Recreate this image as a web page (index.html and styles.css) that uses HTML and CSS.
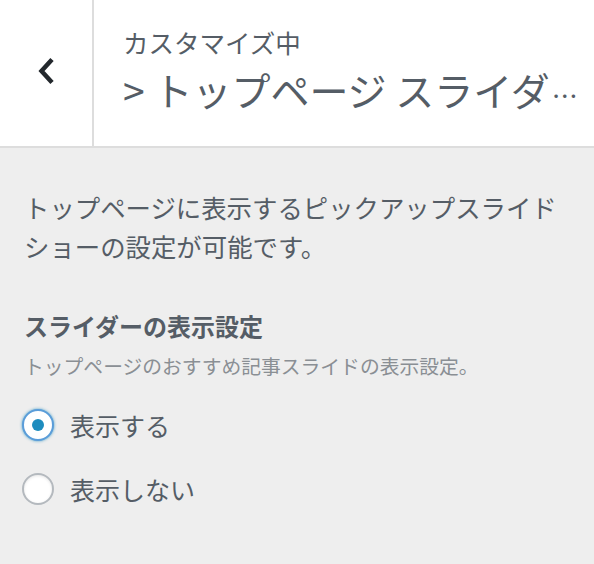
FILE: index.html
```html
<!DOCTYPE html>
<html lang="ja">
<head>
    <meta charset="UTF-8">
    <meta name="viewport" content="width=device-width, initial-scale=1.0">
    <title>カスタマイズ中</title>
    <link rel="stylesheet" href="styles.css">
</head>
<body>

    <!-- Hlavička panelu -->
    <div class="panel-header">
        <button class="back-button" aria-label="戻る">
            <svg width="16" height="28" viewBox="0 0 16 28">
                <path d="M14 2.5 L3.5 14 L14 25.5" fill="none" stroke="#23282d" stroke-width="4.5" stroke-linejoin="miter"/>
            </svg>
        </button>
        <div class="title-wrap">
            <span class="subtitle">カスタマイズ中</span>
            <h3 class="title">&gt; トップページ スライダ<span class="dots">…</span></h3>
        </div>
    </div>

    <!-- Obsah sekce -->
    <div class="panel-body">
        <p class="section-desc">トップページに表示するピックアップスライドショーの設定が可能です。</p>

        <div class="control">
            <span class="control-title">スライダーの表示設定</span>
            <span class="control-desc">トップページのおすすめ記事スライドの表示設定。</span>

            <label class="radio-row">
                <input type="radio" name="slider_show" value="1" checked>
                <span>表示する</span>
            </label>
            <label class="radio-row">
                <input type="radio" name="slider_show" value="0">
                <span>表示しない</span>
            </label>
        </div>
    </div>

</body>
</html>
```

FILE: styles.css
```css
/* Základ */
html, body {
    margin: 0;
    padding: 0;
}

body {
    background-color: #eee;
    color: #555d66;
    font-family: "Noto Sans CJK JP", "Noto Sans", sans-serif;
}

/* Hlavička */
.panel-header {
    display: flex;
    height: 146px;
    background-color: #fff;
    border-bottom: 2px solid #ddd;
}

.back-button {
    width: 94px;
    flex: none;
    padding: 0 0 4px 0;
    margin: 0;
    background: #fff;
    border: none;
    border-right: 2px solid #ddd;
    display: flex;
    align-items: center;
    justify-content: center;
    cursor: pointer;
}

.title-wrap {
    flex: 1;
    min-width: 0;
    padding: 26px 8px 0 29px;
}

.subtitle {
    display: block;
    font-size: 25.5px;
    line-height: 32px;
}

.title {
    margin: 6px 0 0 0;
    font-size: 39px;
    font-weight: normal;
    line-height: 50px;
    white-space: nowrap;
}

.title .dots {
    font-size: 26px;
    margin-left: 2px;
}

/* Obsah */
.panel-body {
    padding: 40px 24px 20px 24px;
}

.section-desc {
    margin: 0;
    font-size: 25.4px;
    line-height: 39px;
}

.control {
    margin-top: 42px;
}

.control-title {
    display: block;
    font-size: 24px;
    font-weight: bold;
    line-height: 35px;
}

.control-desc {
    display: block;
    margin-top: 8px;
    font-size: 19.8px;
    line-height: 30px;
    color: #8a8f94;
}

.radio-row {
    display: flex;
    align-items: center;
    height: 40px;
    margin-top: 24px;
    font-size: 25px;
    cursor: pointer;
}

.radio-row span {
    margin-left: 16px;
}

.radio-row input {
    appearance: none;
    -webkit-appearance: none;
    margin: 0 0 0 -2px;
    width: 32px;
    height: 32px;
    border: 2px solid #b4b9be;
    border-radius: 50%;
    background-color: #fff;
    box-shadow: inset 0 1px 3px rgba(0, 0, 0, 0.1);
    display: flex;
    align-items: center;
    justify-content: center;
    flex: none;
}

.radio-row input:checked {
    border-color: #5b9dd9;
    box-shadow: 0 0 3px rgba(30, 140, 190, 0.8);
}

.radio-row input:checked::before {
    content: "";
    width: 12px;
    height: 12px;
    border-radius: 50%;
    background-color: #1e8cbe;
}
```
